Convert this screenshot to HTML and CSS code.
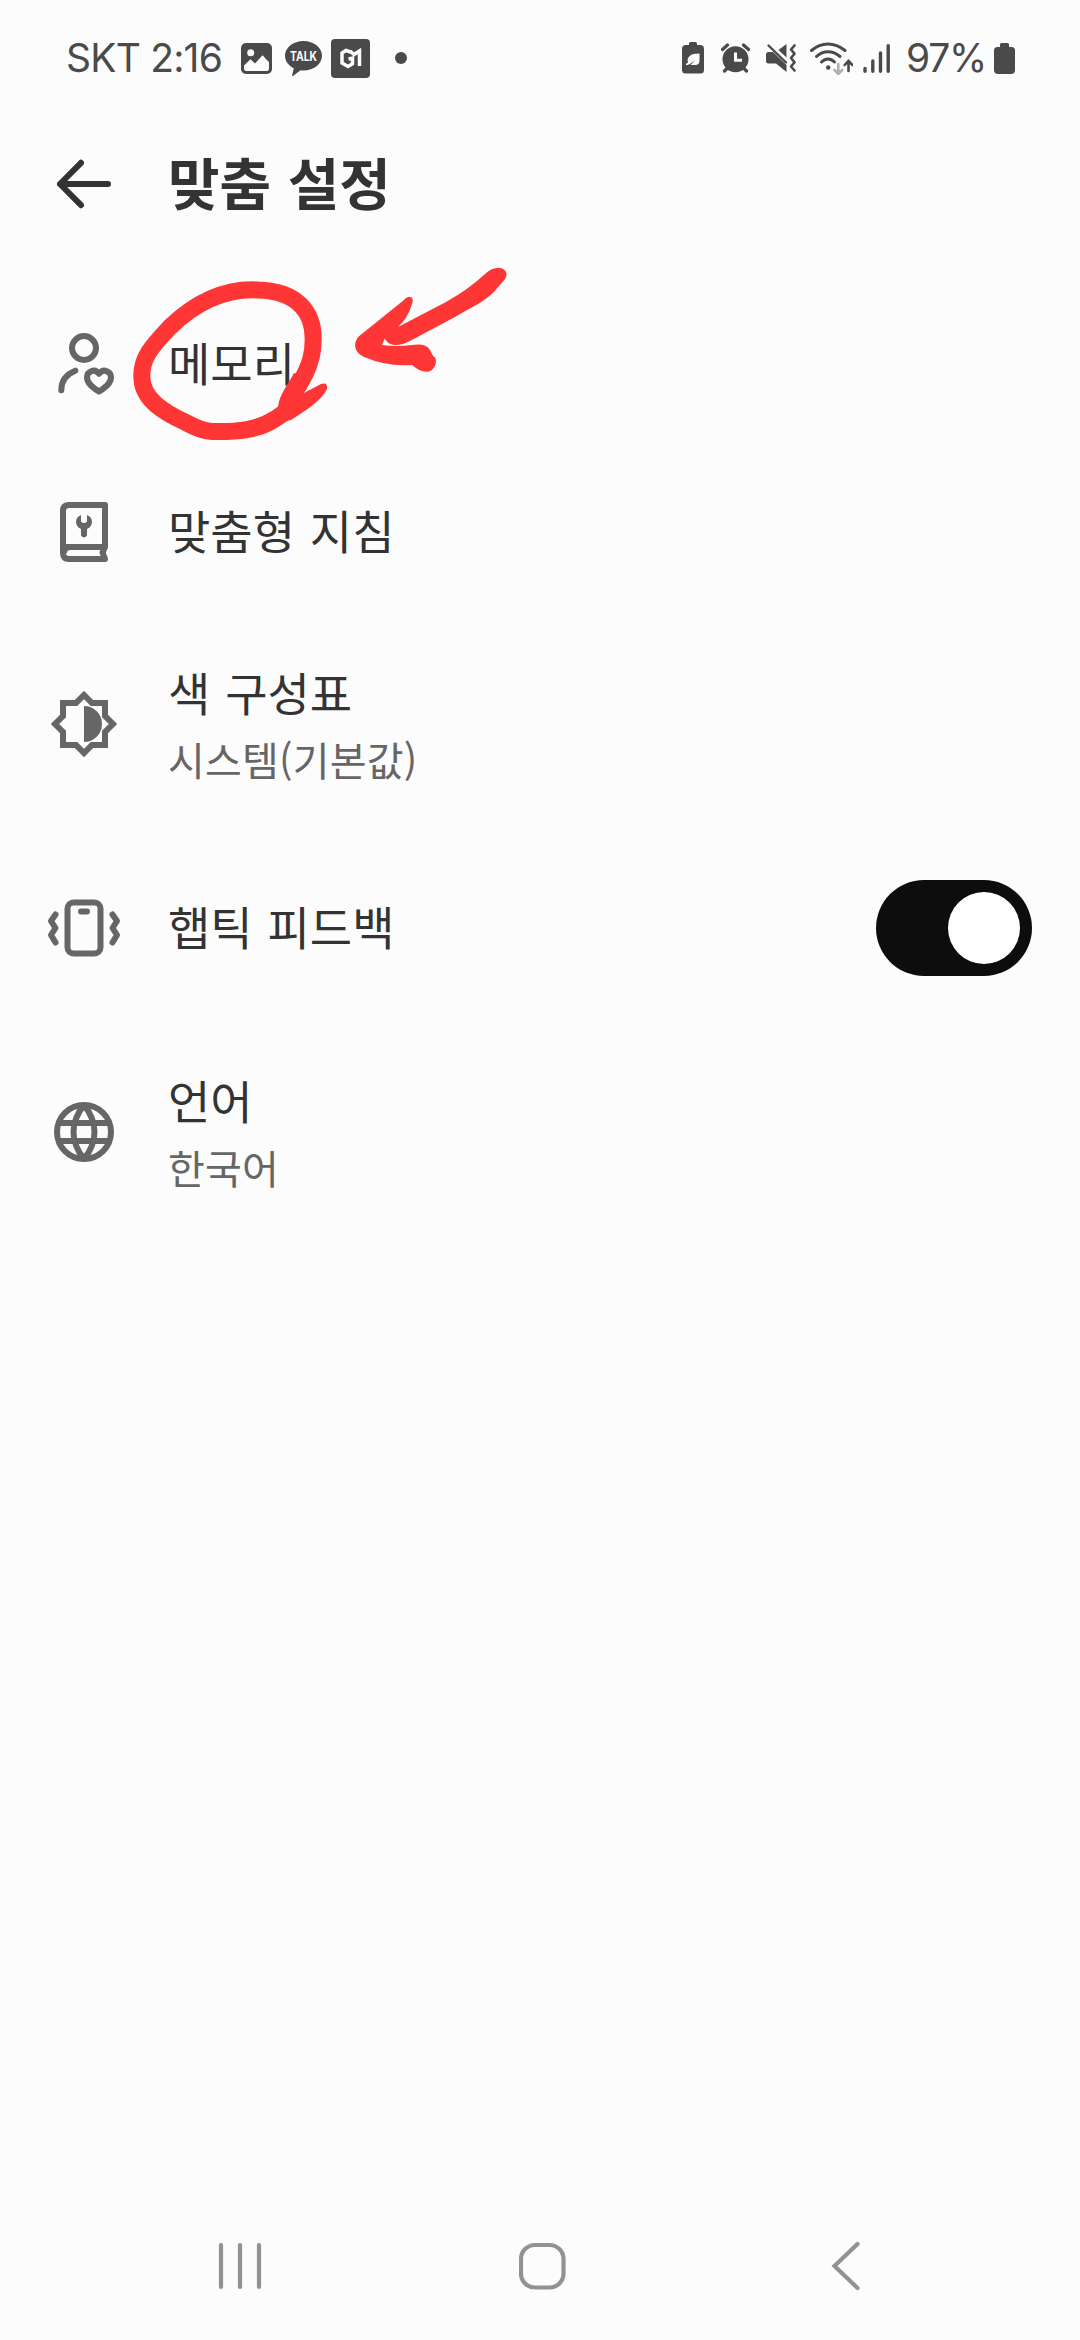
FILE: index.html
```html
<!DOCTYPE html>
<html lang="ko">
<head>
    <meta charset="UTF-8">
    <meta name="viewport" content="width=device-width, initial-scale=1.0">
    <title>맞춤 설정</title>
    <link rel="stylesheet" href="styles.css">
</head>
<body>
    <div class="screen">
        <div class="status-bar">
            <div class="status-left">
                <span class="status-text carrier">SKT 2:16</span>
                <svg class="icon-photo" width="31" height="31" viewBox="0 0 31 31">
                    <rect width="31" height="31" rx="5" fill="#4a4a4a"/>
                    <circle cx="9.7" cy="9.7" r="3.5" fill="#fcfcfc"/>
                    <path d="M3 22.500l6.500-6.300 4.500 4.300 7.500-8.300 6.500 7v6q0 2.800-2.800 2.800H5.800q-2.800 0-2.800-2.800z" fill="#fcfcfc"/>
                </svg>
                <svg class="icon-talk" width="37" height="35" viewBox="0 0 37 35">
                    <path d="M18.500 0C28.700 0 37 6.500 37 14.700S28.700 29.400 18.500 29.400q-1.500 0-3-.2L8 35q-1.200.4-.8-1l1.600-6.800C3.500 24.700 0 20 0 14.700 0 6.500 8.300 0 18.500 0z" fill="#4a4a4a"/>
                    <text class="talk-label" x="18.500" y="19.600" text-anchor="middle" textLength="27" lengthAdjust="spacingAndGlyphs">TALK</text>
                </svg>
                <svg class="icon-app" width="39" height="39" viewBox="0 0 39 39">
                    <rect width="39" height="39" rx="4" fill="#4a4a4a"/>
                    <path d="M19.500 13l-4.500-1.500-4 2.500v10l6 3.500 4.500-2.800v-5.500l-4 .8M19 12l4 3.500 5.500-3.500v15" fill="none" stroke="#fcfcfc" stroke-width="3.500"/>
                </svg>
                <span class="more-dot"></span>
            </div>
            <div class="status-right">
                <svg class="icon-saver" width="22" height="32" viewBox="0 0 22 32">
                    <path d="M7 1.500q0-1.500 1.500-1.500h5q1.500 0 1.500 1.500V3h3q4 0 4 4v21q0 3.500-3.500 3.500h-15Q0 31.500 0 28V7q0-4 4-4h3z" fill="#4a4a4a"/>
                    <path d="M17.500 11.500v7q0 4.500-4.500 4.500H8.500l4.500-4.500-6 4-3 .8v-1.500l2-1q-1.500-4 2-7 2-2.300 9.500-2.300z" fill="#fcfcfc"/>
                </svg>
                <svg class="icon-alarm" width="29" height="30" viewBox="0 0 29 30">
                    <circle cx="14.500" cy="16.300" r="13" fill="#4a4a4a"/>
                    <path d="M1.500 6.500l5-4.500M27.500 6.500l-5-4.500M3.500 28l3-3M25.500 28l-3-3" stroke="#4a4a4a" stroke-width="3.200" stroke-linecap="round"/>
                    <path d="M14.500 9.500v7.700h6.500" fill="none" stroke="#fcfcfc" stroke-width="3"/>
                </svg>
                <svg class="icon-mute" width="30" height="30" viewBox="0 0 30 30">
                    <path d="M20.500 1v13.500L12.500 7zM2.500 9H7l13.500 13V29L10 20.500H2.500Q0 20.500 0 18v-6q0-3 2.500-3z" fill="#4a4a4a"/>
                    <path d="M2.500 2.500L20 19.500" stroke="#4a4a4a" stroke-width="2.400" stroke-linecap="round"/>
                    <path d="M28.500 2.500l-3.500 4 3.500 4.200-3.500 4.300 3.500 4.300-3.500 4.200 3.500 4" fill="none" stroke="#4a4a4a" stroke-width="2.600" stroke-linecap="round" stroke-linejoin="round"/>
                </svg>
                <svg class="icon-wifi" width="43" height="33" viewBox="0 0 43 33">
                    <g fill="none" stroke="#4a4a4a" stroke-width="3" stroke-linecap="round">
                        <path d="M1.500 8.500Q9 2 18 2t17 6.500"/>
                        <path d="M6.500 14.500Q11.500 9.700 18 9.700t12 4.800"/>
                        <path d="M11.500 20q3-3 6.500-3t6.500 3"/>
                    </g>
                    <circle cx="18.200" cy="25.500" r="2.200" fill="#4a4a4a"/>
                    <path d="M28.300 22v10M24.500 28l3.800 4 3.800-4" fill="none" stroke="#b0b0b0" stroke-width="2.600" stroke-linecap="round" stroke-linejoin="round"/>
                    <path d="M38.500 29V18.800M34.700 23l3.800-4.200 3.800 4.200" fill="none" stroke="#4a4a4a" stroke-width="2.600" stroke-linecap="round" stroke-linejoin="round"/>
                </svg>
                <svg class="icon-signal" width="27" height="29" viewBox="0 0 27 29">
                    <path d="M2 24.500v2.800M9.800 17v10.300M17.500 9v18.300M25.200 1.700v25.600" stroke="#4a4a4a" stroke-width="3.400" stroke-linecap="round"/>
                </svg>
                <span class="status-text percent">97%</span>
                <svg class="icon-battery" width="21" height="31" viewBox="0 0 21 31">
                    <path d="M6 1.500Q6 0 7.500 0h6Q15 0 15 1.500V4h2.500Q21 4 21 7.500V27q0 4-4 4H4q-4 0-4-4V7.500Q0 4 3.500 4H6z" fill="#4a4a4a"/>
                </svg>
            </div>
        </div>

        <header class="header">
            <svg class="back-icon" width="72" height="72" viewBox="0 0 72 72">
                <path d="M60 36H12M33 14.800L12 36l21 21.200" fill="none" stroke="#333" stroke-width="6" stroke-linecap="round" stroke-linejoin="round"/>
            </svg>
            <h1>맞춤 설정</h1>
        </header>

        <main class="settings">
            <div class="row">
                <svg class="row-icon" viewBox="0 0 72 72">
                    <g fill="none" stroke="#666" stroke-width="6" stroke-linecap="round" stroke-linejoin="round">
                        <circle cx="36" cy="20" r="12"/>
                        <path d="M13.300 62.200q0-14 14-19.500"/>
                        <path d="M51 63.600C44 59 39 55 39 49.500c0-6.500 8-9.500 12-3.700 4-5.800 12-2.800 12 3.700 0 5.500-5 9.500-12 14.100z"/>
                    </g>
                </svg>
                <div class="row-title">메모리</div>
            </div>
            <div class="row">
                <svg class="row-icon" viewBox="0 0 72 72">
                    <path d="M57 9H21q-6 0-6 6v42q0 6 6 6h36l-2.500-6.500L57 51V9zM16 51h40M16 57q0-6 6-6" fill="none" stroke="#666" stroke-width="6" stroke-linejoin="round"/>
                    <path d="M33 19v6.500q3 3 6 0V19q5 2 5 7 0 4.500-5 7v6.500q-3 4-6 0V33q-5-2.500-5-7 0-5 5-7z" fill="#666"/>
                </svg>
                <div class="row-title">맞춤형 지침</div>
            </div>
            <div class="row row-double">
                <svg class="row-icon" viewBox="0 0 72 72">
                    <path d="M36 7l8 8h13v13l8 8-8 8v13H44l-8 8-8-8H15V44l-8-8 8-8V15h13z" fill="none" stroke="#666" stroke-width="6"/>
                    <path d="M36 18a18 18 0 0 1 0 36z" fill="#666"/>
                </svg>
                <div class="row-body">
                    <div class="row-title">색 구성표</div>
                    <div class="row-value">시스템(기본값)</div>
                </div>
            </div>
            <div class="row row-switch">
                <svg class="row-icon" viewBox="0 0 72 72">
                    <g fill="none" stroke="#666" stroke-width="6" stroke-linecap="round" stroke-linejoin="round">
                        <rect x="19.500" y="10.500" width="33" height="51" rx="6"/>
                        <path d="M33 19.500h6M7.500 22.500L3 29l4.500 7L3 43l4.500 7.500M64.500 22.500L69 29l-4.500 7 4.500 7-4.500 7.500"/>
                    </g>
                </svg>
                <div class="row-title">햅틱 피드백</div>
                <div class="switch"><span class="switch-thumb"></span></div>
            </div>
            <div class="row row-double">
                <svg class="row-icon" viewBox="0 0 72 72">
                    <g fill="none" stroke="#666" stroke-width="6">
                        <circle cx="36" cy="36" r="27"/>
                        <path d="M10 27h52M10 45h52M36 9q-10.500 13-10.500 27T36 63M36 9q10.500 13 10.500 27T36 63"/>
                    </g>
                </svg>
                <div class="row-body">
                    <div class="row-title">언어</div>
                    <div class="row-value">한국어</div>
                </div>
            </div>
        </main>

        <nav class="nav-bar">
            <svg width="48" height="52" viewBox="0 0 48 52">
                <path d="M5 5v42M24 5v42M43 5v42" stroke="#929292" stroke-width="4.200" stroke-linecap="round"/>
            </svg>
            <svg width="48" height="52" viewBox="0 0 48 52">
                <rect x="2" y="5" width="42.500" height="42.500" rx="14" fill="none" stroke="#929292" stroke-width="4.200"/>
            </svg>
            <svg width="48" height="52" viewBox="0 0 48 52">
                <path d="M35.500 4L12.500 26l23 22" fill="none" stroke="#929292" stroke-width="4.200" stroke-linecap="round"/>
            </svg>
        </nav>

        <!-- hand-drawn marker over the memory row -->
        <svg class="marker" width="400" height="190" viewBox="0 0 400 190">
            <g transform="translate(-120 -260)" fill="#ff3636">
                <path class="marker-stroke" d="M287 404C300 384 313 365 313 343C315 312 297 291 258 290C222 288 192 306 170 327C152 346 140 359 142 379C143 400 165 413 185 422Q201 431 212 431.500C238 432 258 430 275 419Q285 413 292 405"/>
                <path d="M278 407C279 395 287 386 294 373L310 377L302 394L321 384Q328 382 327 389C322 400 308 409 291 420L277 423Z"/>
                <path d="M485 274C493 266 503 266 506 272C508 278 503 281 499 286C488 301 471 307 455 317L408 342C398 347 387 346 385 338L382 345Q396 347 412 345Q426 343 430 350L433 356C438 358 436 367 432 370C426 374 419 371 412 365Q388 367 364 357C354 352 353 344 358 337L404 300C409 294 415 297 412 304Q408 318 398 327L446 302Q469 289 485 274Z"/>
            </g>
        </svg>
    </div>
</body>
</html>
```
FILE: styles.css
```css
* {
    box-sizing: border-box;
    margin: 0;
    padding: 0;
}

body {
    background-color: #fcfcfc;
    font-family: "Noto Sans CJK KR", sans-serif;
    color: #333;
}

svg {
    display: block;
    flex-shrink: 0;
}

.screen {
    position: relative;
    display: flex;
    flex-direction: column;
    width: 1080px;
    height: 2340px;
    overflow: hidden;
}

/* status bar */
.status-bar {
    display: flex;
    align-items: center;
    justify-content: space-between;
    height: 116px;
    padding: 0 65px 0 66px;
}

.status-left,
.status-right {
    display: flex;
    align-items: center;
}

.status-text {
    font-family: Inter, Roboto, sans-serif;
    font-size: 39px;
    font-weight: 400;
    line-height: 38px;
    color: #4a4a4a;
    white-space: nowrap;
}

.carrier {
    width: 175px;
    letter-spacing: -0.8px;
}

.percent {
    width: 88px;
    letter-spacing: -1.2px;
}

.icon-talk {
    margin-left: 13px;
}

.icon-app {
    margin-left: 9px;
}

.talk-label {
    font-family: Inter, sans-serif;
    font-size: 12.5px;
    font-weight: 700;
    fill: #fcfcfc;
}

.more-dot {
    width: 12px;
    height: 12px;
    margin-left: 25px;
    border-radius: 50%;
    background-color: #4a4a4a;
}

.icon-alarm {
    margin-left: 17px;
}

.icon-mute {
    margin-left: 16px;
}

.icon-wifi {
    margin-left: 14px;
}

.icon-signal {
    margin-left: 10px;
    margin-right: 16px;
}

/* header */
.header {
    display: flex;
    align-items: center;
    gap: 48px;
    height: 136px;
    padding: 0 48px;
}

h1 {
    padding-bottom: 6px;
    font-size: 56px;
    font-weight: 700;
    line-height: 72px;
    word-spacing: 1px;
}

/* settings list */
.settings {
    flex: 1;
    padding-top: 28px;
}

.row {
    display: flex;
    align-items: center;
    gap: 48px;
    height: 168px;
    padding: 0 48px;
}

.row-double {
    height: 216px;
}

.row-switch {
    height: 192px;
}

.row-icon {
    width: 72px;
    height: 72px;
    overflow: visible;
}

.row-title {
    padding-bottom: 5px;
    font-size: 46px;
    line-height: 67px;
    word-spacing: 2px;
}

.row-body {
    padding-bottom: 2px;
}

.row-body .row-title {
    padding-bottom: 4px;
}

.row-value {
    font-size: 40px;
    line-height: 60px;
    color: #666;
    letter-spacing: 0.2px;
}

.switch {
    display: flex;
    align-items: center;
    justify-content: flex-end;
    width: 156px;
    height: 96px;
    margin-left: auto;
    padding: 12px;
    border-radius: 48px;
    background-color: #0d0d0d;
}

.switch-thumb {
    width: 72px;
    height: 72px;
    border-radius: 50%;
    background-color: #fff;
}

/* navigation */
.nav-bar {
    display: flex;
    align-items: center;
    justify-content: space-between;
    height: 148px;
    padding: 0 210px 0 216px;
}

.marker {
    position: absolute;
    left: 120px;
    top: 260px;
    pointer-events: none;
}

.marker-stroke {
    fill: none;
    stroke: #ff3636;
    stroke-width: 17px;
    stroke-linejoin: round;
}
```
